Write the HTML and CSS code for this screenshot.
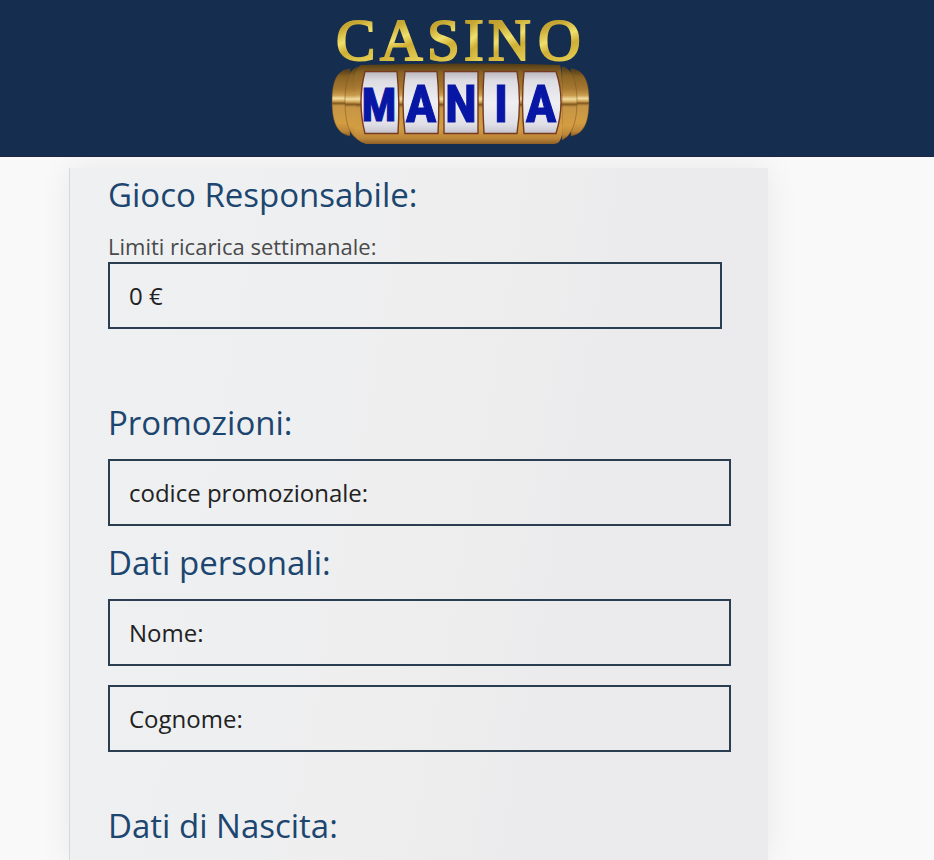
FILE: index.html
```html
<!DOCTYPE html>
<html lang="it">
<head>
<meta charset="utf-8">
<meta name="viewport" content="width=device-width, initial-scale=1">
<title>Casino Mania</title>
<link rel="stylesheet" href="styles.css">
</head>
<body>
<header class="site-header">
  <svg class="logo" viewBox="320 0 280 156" role="img" aria-label="Casino Mania">
    <defs>
      <linearGradient id="gold-text" x1="0" y1="0" x2="0.25" y2="1">
        <stop offset="0" stop-color="#a98a28"/>
        <stop offset="0.35" stop-color="#c9a934"/>
        <stop offset="0.55" stop-color="#f0e06c"/>
        <stop offset="0.7" stop-color="#cfae34"/>
        <stop offset="1" stop-color="#e8d45a"/>
      </linearGradient>
      <linearGradient id="gold-body" x1="0" y1="0" x2="0" y2="1">
        <stop offset="0" stop-color="#4f3a16"/>
        <stop offset="0.12" stop-color="#8a6425"/>
        <stop offset="0.3" stop-color="#a87931"/>
        <stop offset="0.39" stop-color="#c99c4e"/>
        <stop offset="0.44" stop-color="#f3dda0"/>
        <stop offset="0.48" stop-color="#cfa454"/>
        <stop offset="0.51" stop-color="#82581f"/>
        <stop offset="0.55" stop-color="#c69545"/>
        <stop offset="0.8" stop-color="#d39d42"/>
        <stop offset="0.93" stop-color="#bb8539"/>
        <stop offset="1" stop-color="#8d6028"/>
      </linearGradient>
      <linearGradient id="reel" x1="0" y1="0" x2="0" y2="1">
        <stop offset="0" stop-color="#b9b5bd"/>
        <stop offset="0.15" stop-color="#dddce2"/>
        <stop offset="0.5" stop-color="#efeff3"/>
        <stop offset="0.85" stop-color="#e0dfe6"/>
        <stop offset="1" stop-color="#c5c2cb"/>
      </linearGradient>
    </defs>
    <g fill="url(#gold-body)" stroke="#755021" stroke-width="0.5">
      <path d="M350 69C338 70 332 79 332 101C332 124 338 134 350 136Z"/>
      <path d="M571 69C583 70 589 79 589 101C589 124 583 134 571 136Z"/>
      <path d="M359 67C350 68 345 80 345 101C345 124 350 136 359 140Z"/>
      <path d="M562 67C571 68 577 80 577 101C577 124 571 136 562 140Z"/>
      <path stroke="none" d="M361 65Q460 62 560 65Q562 72 562 84V120Q564 136 559 142Q557 144 552 144H366Q361 143 357 139Q352 133 356 116V86Q352 71 361 65Z"/>
    </g>
    <g fill="url(#reel)" stroke="#753a20" stroke-width="1.4">
      <path d="M365 71.500H397Q400 101 398 133.500H365Q357 102 365 71.500Z"/>
      <path d="M405 71.500H437Q440 101 438 133.500H405Q401 101 405 71.500Z"/>
      <path d="M444 71.500H478V133.500H444Z"/>
      <path d="M484 71.500H517Q522 101 517 133.500H484Q482 101 484 71.500Z"/>
      <path d="M524 71.500H556Q566 101 556 133.500H524Q521 101 524 71.500Z"/>
    </g>
    <g class="logo-casino" fill="url(#gold-text)">
      <text x="336" y="60">C</text><text x="380" y="60">A</text><text x="427" y="60">S</text><text x="464" y="60">I</text><text x="488" y="60">N</text><text x="538" y="60">O</text>
    </g>
    <g class="logo-mania">
      <text class="wide" x="379" y="121">M</text><text x="421" y="122">A</text><text x="461" y="122">N</text><text x="501" y="122">I</text><text x="541" y="122">A</text>
    </g>
  </svg>
</header>
<main class="page">
  <form class="panel">
    <section class="group group-limits">
      <h2>Gioco Responsabile:</h2>
      <label for="limit">Limiti ricarica settimanale:</label>
      <select class="field" id="limit"><option>0 €</option></select>
    </section>
    <section class="group">
      <h2>Promozioni:</h2>
      <input class="field" type="text" aria-label="codice promozionale:" placeholder="codice promozionale:">
    </section>
    <section class="group group-person">
      <h2>Dati personali:</h2>
      <input class="field" type="text" aria-label="Nome:" placeholder="Nome:">
      <input class="field" type="text" aria-label="Cognome:" placeholder="Cognome:">
    </section>
    <section class="group">
      <h2>Dati di Nascita:</h2>
    </section>
  </form>
</main>
</body>
</html>
```
FILE: styles.css
```css
* {
  box-sizing: border-box;
}

body {
  display: flex;
  flex-direction: column;
  min-height: 100vh;
  margin: 0;
  background: #f9f9f9;
  color: #222;
  font-family: "Open Sans", "Noto Sans", sans-serif;
}

.site-header {
  position: relative;
  z-index: 1;
  display: flex;
  justify-content: center;
  padding-right: 14px;
  border-bottom: 1px solid #1b2740;
  background: #152d4f;
}

.logo {
  width: 280px;
  height: 156px;
}

.logo-casino {
  font-family: "Liberation Serif", serif;
  font-size: 59px;
  stroke: url(#gold-text);
  stroke-width: 2;
}

.logo-mania {
  fill: #0716a4;
  stroke: #0716a4;
  stroke-width: 1;
  font-family: "Liberation Sans Narrow", "Roboto Condensed", "Liberation Sans", sans-serif;
  font-size: 52px;
  font-weight: 700;
  text-anchor: middle;
}

.logo-mania .wide {
  font-size: 46px;
}

.page {
  display: flex;
  flex: 1;
  padding: 11px 166px 0 69px;
}

.panel {
  flex: 1;
  padding: 3px 37px 0 38px;
  border-left: 1px solid #d6d8dc;
  background: linear-gradient(100deg, #eef0f2 0%, #eeeff1 35%, #efeeee 50%, #ebebed 70%, #ebebed 100%);
  box-shadow: 0 0 32px rgba(0, 0, 0, 0.07);
}

.group {
  display: flex;
  flex-direction: column;
}

.group-limits {
  padding-right: 9px;
  margin-bottom: 70px;
}

.group-person {
  margin: 13px 0 50px;
}

h2 {
  margin: 0 0 12px;
  color: #1c466f;
  font-size: 33px;
  font-weight: 400;
  line-height: 48px;
}

.group-limits h2 {
  margin-bottom: 11px;
}

label {
  color: #4a4a4a;
  font-size: 22px;
  line-height: 32px;
}

.field {
  width: 100%;
  height: 67px;
  padding: 0 19px;
  border: 2px solid #2b3d50;
  border-radius: 0;
  appearance: none;
  background: transparent;
  color: #222;
  font-family: inherit;
  font-size: 24px;
}

.field::placeholder {
  color: #222;
  opacity: 1;
}

.field + .field {
  margin-top: 19px;
}
```
